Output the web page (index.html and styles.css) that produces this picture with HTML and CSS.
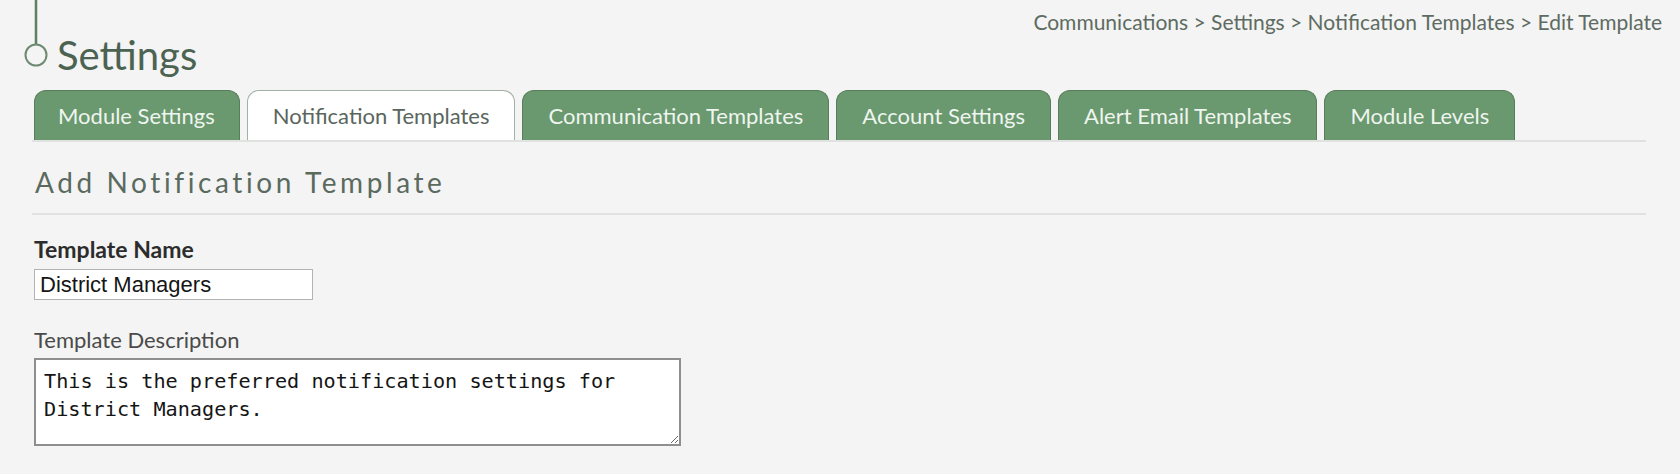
FILE: index.html
```html
<!DOCTYPE html>
<html lang="en">

<head>
    <meta charset="UTF-8">
    <meta name="viewport" content="width=device-width, initial-scale=1.0">
    <title>Settings - Add Notification Template</title>
    <link rel="stylesheet" href="styles.css">
</head>

<body>
    <div id="header">
        <!-- timeline marker -->
        <svg class="marker" width="24" height="68" viewBox="0 0 24 68">
            <line x1="12" y1="0" x2="12" y2="44" stroke="#5d7f62" stroke-width="2.5" />
            <circle cx="12" cy="55" r="10.5" fill="none" stroke="#6e8a73" stroke-width="2" />
        </svg>
        <h1>Settings</h1>
        <div class="crumbs">
            <a href="#">Communications</a> &gt; <a href="#">Settings</a> &gt; <a href="#">Notification Templates</a> &gt; Edit Template
        </div>
    </div>

    <div id="main">
        <ul class="tabs">
            <li><a href="#">Module Settings</a></li>
            <li class="active"><a href="#">Notification Templates</a></li>
            <li><a href="#">Communication Templates</a></li>
            <li><a href="#">Account Settings</a></li>
            <li><a href="#">Alert Email Templates</a></li>
            <li><a href="#">Module Levels</a></li>
        </ul>

        <h2>Add Notification Template</h2>

        <form class="form">
            <label class="name-label" for="tplName">Template Name</label>
            <input id="tplName" type="text" value="District Managers">

            <label class="desc-label" for="tplDesc">Template Description</label>
            <textarea id="tplDesc">This is the preferred notification settings for District Managers.</textarea>
        </form>
    </div>
</body>

</html>
```

FILE: styles.css
```css
* {
    margin: 0;
    padding: 0;
}

body {
    background-color: #f3f4f3;
    font-family: Lato, "Open Sans", sans-serif;
    color: #4b5a50;
}

a {
    color: inherit;
    text-decoration: none;
}

ul {
    list-style: none;
}

/* header */
#header {
    display: flex;
    align-items: flex-start;
    height: 90px;
    padding: 0 18px 0 24px;
}

#header .marker {
    display: block;
}

#header h1 {
    margin: 33px 0 0 9px;
    font-size: 40px;
    line-height: 44px;
    font-weight: 400;
    color: #4c6352;
}

#header .crumbs {
    margin: 10px 0 0 auto;
    font-size: 21px;
    line-height: 24px;
    color: #5e6b62;
}

/* content */
#main {
    padding: 0 34px 0 32px;
}

.tabs {
    display: flex;
    gap: 7px;
    padding-left: 2px;
    border-bottom: 2px solid #dfe2df;
}

.tabs li {
    display: flex;
    align-items: center;
    height: 49px;
    padding: 0 25px;
    background: #6a986f;
    border: 1px solid #587d5b;
    border-bottom: none;
    border-radius: 12px 12px 0 0;
    font-size: 22px;
    color: #eef5ee;
}

.tabs li:first-child {
    padding: 0 24px 0 23px;
}

.tabs li.active {
    background: #fff;
    border-color: #a3b0a5;
    color: #5a665d;
}

h2 {
    margin-top: 23px;
    padding: 0 0 14px 3px;
    border-bottom: 2px solid #dfe2df;
    font-size: 28px;
    line-height: 34px;
    font-weight: 400;
    letter-spacing: 3.6px;
    color: #5b6a5f;
}

.form {
    display: flex;
    flex-direction: column;
    align-items: flex-start;
    padding-left: 2px;
}

.form label {
    font-size: 22px;
    line-height: 24px;
}

.name-label {
    margin-top: 22px;
    font-size: 23px !important;
    font-weight: 700;
    color: #2c2c2c;
}

.desc-label {
    margin-top: 28px;
    color: #4a4a4a;
}

.form input {
    box-sizing: border-box;
    width: 279px;
    height: 31px;
    margin-top: 8px;
    padding: 0 5px;
    border: 1px solid #b3b3b3;
    background: #fff;
    font-family: "Liberation Sans", Arial, sans-serif;
    font-size: 22px;
    color: #151515;
}

.form textarea {
    box-sizing: border-box;
    width: 647px;
    height: 88px;
    margin-top: 6px;
    padding: 7px 8px;
    border: 2px solid #8e8e8e;
    background: #fff;
    font-family: "DejaVu Sans Mono", "Liberation Mono", monospace;
    font-size: 20.2px;
    line-height: 28px;
    color: #151515;
}
```
